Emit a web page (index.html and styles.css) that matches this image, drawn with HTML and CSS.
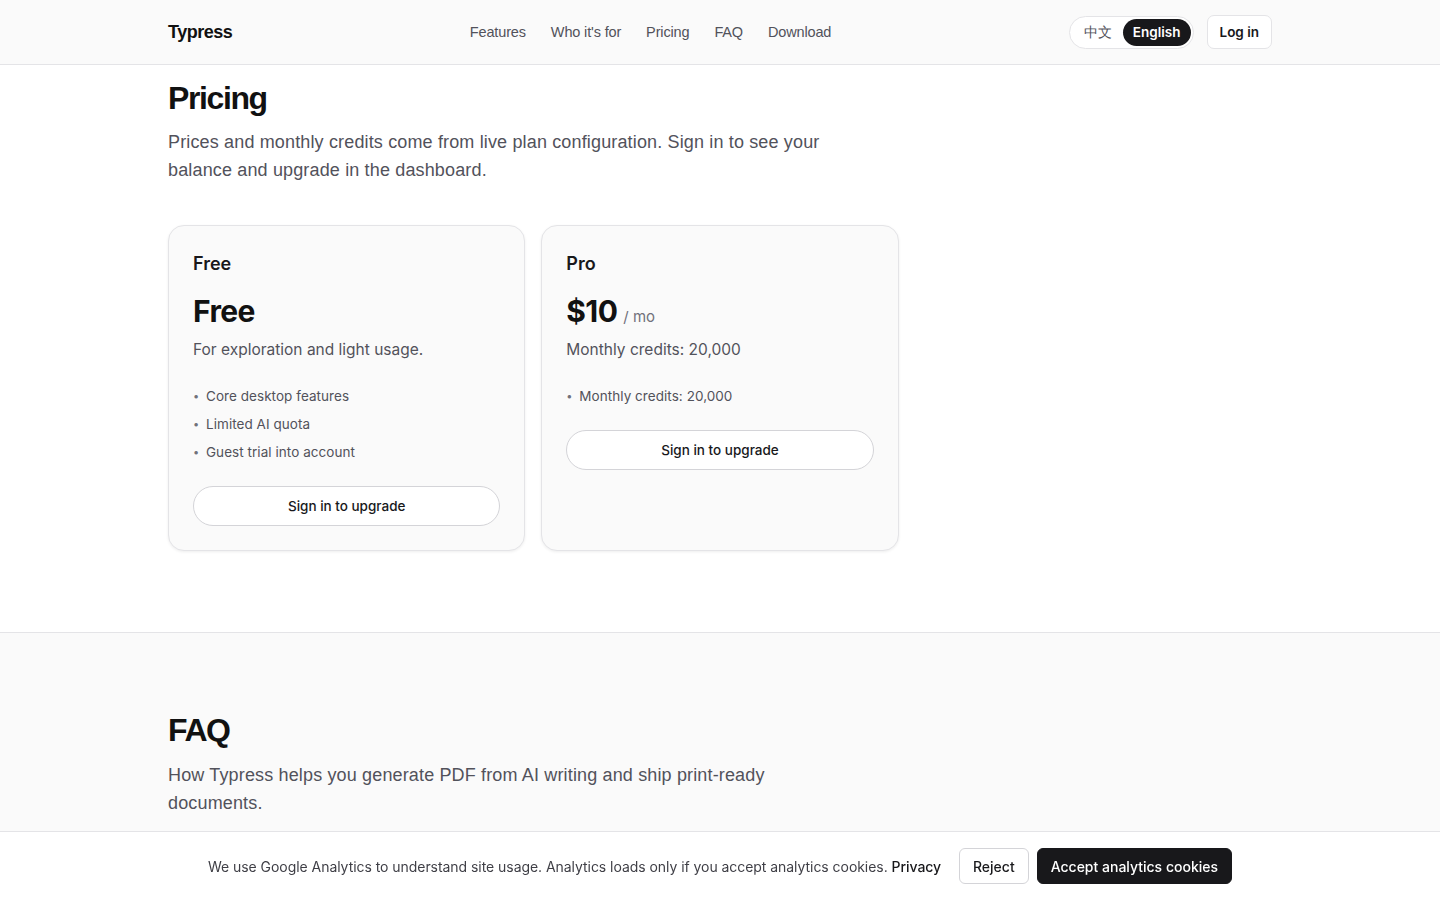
FILE: index.html
```html
<!DOCTYPE html>
<html lang="en">
<head>
<meta charset="utf-8">
<title>Typress — Pricing</title>
<link rel="stylesheet" href="styles.css">
</head>
<body>
<header class="site-header">
  <div class="container header-inner">
    <a class="logo" href="#">Typress</a>
    <nav class="main-nav">
      <a href="#">Features</a>
      <a href="#">Who it's for</a>
      <a href="#">Pricing</a>
      <a href="#">FAQ</a>
      <a href="#">Download</a>
    </nav>
    <div class="header-actions">
      <div class="lang-toggle">
        <span class="lang-opt">中文</span>
        <span class="lang-opt active">English</span>
      </div>
      <a class="login-btn" href="#">Log in</a>
    </div>
  </div>
</header>

<main>
  <section class="section pricing">
    <div class="container">
      <h2 class="section-title">Pricing</h2>
      <p class="section-lead">Prices and monthly credits come from live plan configuration. Sign in to see your balance and upgrade in the dashboard.</p>
      <div class="plan-grid">
        <div class="plan-card">
          <h3 class="plan-name">Free</h3>
          <div class="plan-price"><span class="amount">Free</span></div>
          <p class="plan-desc">For exploration and light usage.</p>
          <ul class="plan-features">
            <li>Core desktop features</li>
            <li>Limited AI quota</li>
            <li>Guest trial into account</li>
          </ul>
          <a class="plan-btn" href="#">Sign in to upgrade</a>
        </div>
        <div class="plan-card">
          <h3 class="plan-name">Pro</h3>
          <div class="plan-price"><span class="amount">$10</span><span class="period">/ mo</span></div>
          <p class="plan-desc">Monthly credits: 20,000</p>
          <ul class="plan-features">
            <li>Monthly credits: 20,000</li>
          </ul>
          <a class="plan-btn" href="#">Sign in to upgrade</a>
        </div>
      </div>
    </div>
  </section>

  <section class="section faq">
    <div class="container">
      <h2 class="section-title">FAQ</h2>
      <p class="section-lead">How Typress helps you generate PDF from AI writing and ship print-ready documents.</p>
    </div>
  </section>
</main>

<div class="cookie-bar">
  <div class="cookie-inner">
    <p class="cookie-text">We use Google Analytics to understand site usage. Analytics loads only if you accept analytics cookies. <a href="#">Privacy</a></p>
    <button class="cookie-btn reject">Reject</button>
    <button class="cookie-btn accept">Accept analytics cookies</button>
  </div>
</div>
</body>
</html>
```

FILE: styles.css
```css
* { box-sizing: border-box; }
html, body { margin: 0; padding: 0; }
body {
  font-family: "Liberation Sans", Arial, sans-serif;
  color: #18181b;
  background: #ffffff;
}
a { color: inherit; text-decoration: none; }

.container {
  width: 1104px;
  margin: 0 auto;
}

/* Header */
.site-header {
  background: #fafafa;
  border-bottom: 1px solid #e4e4e7;
}
.header-inner {
  height: 64px;
  display: flex;
  align-items: center;
  justify-content: space-between;
}
.logo {
  font-size: 18px;
  font-weight: 700;
  letter-spacing: -0.5px;
  color: #111;
}
.main-nav {
  display: flex;
  gap: 25px;
  font-size: 14.5px;
  color: #52525b;
  letter-spacing: -0.15px;
}
.header-actions {
  display: flex;
  align-items: center;
  gap: 13px;
}
.lang-toggle {
  display: flex;
  align-items: center;
  height: 33px;
  padding: 2px;
  border: 1px solid #e4e4e7;
  border-radius: 999px;
  background: #fff;
  font-family: "Inter", sans-serif;
  font-size: 13.5px;
}
.lang-opt {
  padding: 0 10px;
  height: 27px;
  line-height: 27px;
  border-radius: 999px;
  color: #52525b;
}
.lang-opt:first-child { padding: 0 11px 0 12px; }
.lang-opt.active {
  background: #18181b;
  color: #fff;
  font-weight: 600;
}
.login-btn {
  font-family: "Inter", sans-serif;
  font-size: 13.5px;
  font-weight: 600;
  height: 34px;
  line-height: 32px;
  padding: 0 12px;
  border: 1px solid #e4e4e7;
  border-radius: 7px;
  background: #fff;
  color: #18181b;
}

/* Sections */
.section { padding: 13px 0 81px; }
.section.faq {
  background: #fafafa;
  border-top: 1px solid #e4e4e7;
  padding-top: 77px;
}
.section-title {
  margin: 0;
  font-size: 32px;
  line-height: 40px;
  font-weight: 700;
  letter-spacing: -1.4px;
  color: #111;
}
.section-lead {
  margin: 10px 0 0;
  max-width: 672px;
  font-size: 18px;
  line-height: 28px;
  color: #52525b;
  letter-spacing: 0.15px;
}
.faq .section-lead { margin-top: 11px; }

/* Plans */
.plan-grid {
  margin-top: 41px;
  display: grid;
  grid-template-columns: repeat(3, 1fr);
  gap: 16px;
}
.plan-card {
  font-family: "Inter", sans-serif;
  background: #fafafa;
  border: 1px solid #e4e4e7;
  border-radius: 16px;
  padding: 24px;
  box-shadow: 0 1px 3px rgba(0,0,0,0.07);
  display: flex;
  flex-direction: column;
}
.plan-name {
  margin: 0;
  font-size: 18px;
  line-height: 28px;
  font-weight: 600;
  color: #18181b;
}
.plan-price {
  margin-top: 15px;
  display: flex;
  align-items: baseline;
  gap: 6px;
}
.plan-price .amount {
  font-size: 30px;
  line-height: 36px;
  font-weight: 700;
  letter-spacing: -0.6px;
  color: #111;
}
.plan-price .period {
  font-size: 15px;
  color: #71717a;
}
.plan-desc {
  margin: 9px 0 0;
  font-size: 15.5px;
  line-height: 24px;
  color: #52525b;
  letter-spacing: 0;
}
.plan-features {
  list-style: none;
  margin: 20px 0 0;
  padding: 0;
}
.plan-features li {
  position: relative;
  padding-left: 13px;
  font-size: 13.5px;
  line-height: 28px;
  color: #52525b;
  letter-spacing: 0.05px;
}
.plan-features li::before {
  content: "•";
  position: absolute;
  left: 0;
  color: #71717a;
  font-size: 11px;
}
.plan-btn {
  margin-top: 20px;
  height: 40px;
  display: flex;
  align-items: center;
  justify-content: center;
  background: #fff;
  border: 1px solid #d4d4d8;
  border-radius: 999px;
  font-size: 13.5px;
  font-weight: 500;
  color: #18181b;
}

/* Cookie bar */
.cookie-bar {
  position: fixed;
  left: 0;
  right: 0;
  bottom: 0;
  height: 69px;
  background: rgba(255,255,255,0.98);
  border-top: 1px solid #e4e4e7;
  font-family: "Inter", sans-serif;
}
.cookie-inner {
  width: 1024px;
  height: 100%;
  margin: 0 auto;
  display: flex;
  align-items: center;
  gap: 8px;
}
.cookie-text {
  flex: 1;
  margin: 0;
  font-size: 14px;
  color: #3f3f46;
  letter-spacing: -0.05px;
}
.cookie-text a {
  color: #18181b;
  font-weight: 500;
}
.cookie-btn {
  font-family: "Inter", sans-serif;
  font-size: 14px;
  font-weight: 500;
  height: 36px;
  padding: 0 13px;
  border-radius: 6px;
  cursor: pointer;
}
.cookie-btn.reject {
  background: #fff;
  border: 1px solid #d4d4d8;
  color: #18181b;
}
.cookie-btn.accept {
  background: #18181b;
  border: 1px solid #18181b;
  color: #fff;
}
```
